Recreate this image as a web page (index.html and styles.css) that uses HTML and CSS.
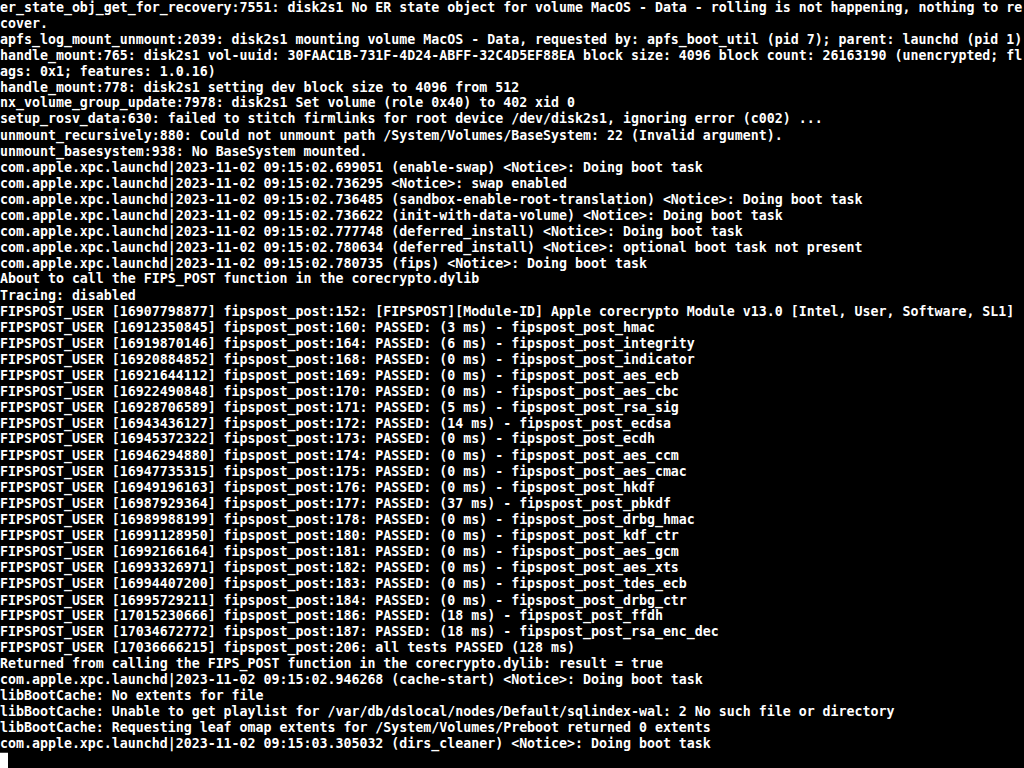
FILE: index.html
```html
<!DOCTYPE html>
<html>
<head>
<meta charset="utf-8">
<link rel="stylesheet" href="styles.css">
</head>
<body>
<pre class="console">er_state_obj_get_for_recovery:7551: disk2s1 No ER state object for volume MacOS - Data - rolling is not happening, nothing to re
cover.
apfs_log_mount_unmount:2039: disk2s1 mounting volume MacOS - Data, requested by: apfs_boot_util (pid 7); parent: launchd (pid 1)
handle_mount:765: disk2s1 vol-uuid: 30FAAC1B-731F-4D24-ABFF-32C4D5EF88EA block size: 4096 block count: 26163190 (unencrypted; fl
ags: 0x1; features: 1.0.16)
handle_mount:778: disk2s1 setting dev block size to 4096 from 512
nx_volume_group_update:7978: disk2s1 Set volume (role 0x40) to 402 xid 0
setup_rosv_data:630: failed to stitch firmlinks for root device /dev/disk2s1, ignoring error (c002) ...
unmount_recursively:880: Could not unmount path /System/Volumes/BaseSystem: 22 (Invalid argument).
unmount_basesystem:938: No BaseSystem mounted.
com.apple.xpc.launchd|2023-11-02 09:15:02.699051 (enable-swap) &lt;Notice&gt;: Doing boot task
com.apple.xpc.launchd|2023-11-02 09:15:02.736295 &lt;Notice&gt;: swap enabled
com.apple.xpc.launchd|2023-11-02 09:15:02.736485 (sandbox-enable-root-translation) &lt;Notice&gt;: Doing boot task
com.apple.xpc.launchd|2023-11-02 09:15:02.736622 (init-with-data-volume) &lt;Notice&gt;: Doing boot task
com.apple.xpc.launchd|2023-11-02 09:15:02.777748 (deferred_install) &lt;Notice&gt;: Doing boot task
com.apple.xpc.launchd|2023-11-02 09:15:02.780634 (deferred_install) &lt;Notice&gt;: optional boot task not present
com.apple.xpc.launchd|2023-11-02 09:15:02.780735 (fips) &lt;Notice&gt;: Doing boot task
About to call the FIPS_POST function in the corecrypto.dylib
Tracing: disabled
FIPSPOST_USER [16907798877] fipspost_post:152: [FIPSPOST][Module-ID] Apple corecrypto Module v13.0 [Intel, User, Software, SL1]
FIPSPOST_USER [16912350845] fipspost_post:160: PASSED: (3 ms) - fipspost_post_hmac
FIPSPOST_USER [16919870146] fipspost_post:164: PASSED: (6 ms) - fipspost_post_integrity
FIPSPOST_USER [16920884852] fipspost_post:168: PASSED: (0 ms) - fipspost_post_indicator
FIPSPOST_USER [16921644112] fipspost_post:169: PASSED: (0 ms) - fipspost_post_aes_ecb
FIPSPOST_USER [16922490848] fipspost_post:170: PASSED: (0 ms) - fipspost_post_aes_cbc
FIPSPOST_USER [16928706589] fipspost_post:171: PASSED: (5 ms) - fipspost_post_rsa_sig
FIPSPOST_USER [16943436127] fipspost_post:172: PASSED: (14 ms) - fipspost_post_ecdsa
FIPSPOST_USER [16945372322] fipspost_post:173: PASSED: (0 ms) - fipspost_post_ecdh
FIPSPOST_USER [16946294880] fipspost_post:174: PASSED: (0 ms) - fipspost_post_aes_ccm
FIPSPOST_USER [16947735315] fipspost_post:175: PASSED: (0 ms) - fipspost_post_aes_cmac
FIPSPOST_USER [16949196163] fipspost_post:176: PASSED: (0 ms) - fipspost_post_hkdf
FIPSPOST_USER [16987929364] fipspost_post:177: PASSED: (37 ms) - fipspost_post_pbkdf
FIPSPOST_USER [16989988199] fipspost_post:178: PASSED: (0 ms) - fipspost_post_drbg_hmac
FIPSPOST_USER [16991128950] fipspost_post:180: PASSED: (0 ms) - fipspost_post_kdf_ctr
FIPSPOST_USER [16992166164] fipspost_post:181: PASSED: (0 ms) - fipspost_post_aes_gcm
FIPSPOST_USER [16993326971] fipspost_post:182: PASSED: (0 ms) - fipspost_post_aes_xts
FIPSPOST_USER [16994407200] fipspost_post:183: PASSED: (0 ms) - fipspost_post_tdes_ecb
FIPSPOST_USER [16995729211] fipspost_post:184: PASSED: (0 ms) - fipspost_post_drbg_ctr
FIPSPOST_USER [17015230666] fipspost_post:186: PASSED: (18 ms) - fipspost_post_ffdh
FIPSPOST_USER [17034672772] fipspost_post:187: PASSED: (18 ms) - fipspost_post_rsa_enc_dec
FIPSPOST_USER [17036666215] fipspost_post:206: all tests PASSED (128 ms)
Returned from calling the FIPS_POST function in the corecrypto.dylib: result = true
com.apple.xpc.launchd|2023-11-02 09:15:02.946268 (cache-start) &lt;Notice&gt;: Doing boot task
libBootCache: No extents for file
libBootCache: Unable to get playlist for /var/db/dslocal/nodes/Default/sqlindex-wal: 2 No such file or directory
libBootCache: Requesting leaf omap extents for /System/Volumes/Preboot returned 0 extents
com.apple.xpc.launchd|2023-11-02 09:15:03.305032 (dirs_cleaner) &lt;Notice&gt;: Doing boot task
<span class="cursor"></span></pre>
</body>
</html>
```
FILE: styles.css
```css
html, body {
  margin: 0;
  padding: 0;
  background: #000;
  width: 1024px;
  height: 768px;
  overflow: hidden;
}

/* Boot console: 8px cells, 16px rows; glyphs stretched vertically
   to mimic the tall bitmap console font. */
.console {
  margin: 0;
  padding: 0;
  color: #fff;
  font-family: "DejaVu Sans Mono", "Liberation Mono", monospace;
  font-weight: bold;
  font-size: 13.27px;
  line-height: 14.9px;
  white-space: pre;
  transform-origin: 0 0;
  transform: scaleY(1.07383);
}

.cursor {
  display: inline-block;
  width: 8px;
  height: 14.9px;
  background: #fff;
  vertical-align: bottom;
}
```
